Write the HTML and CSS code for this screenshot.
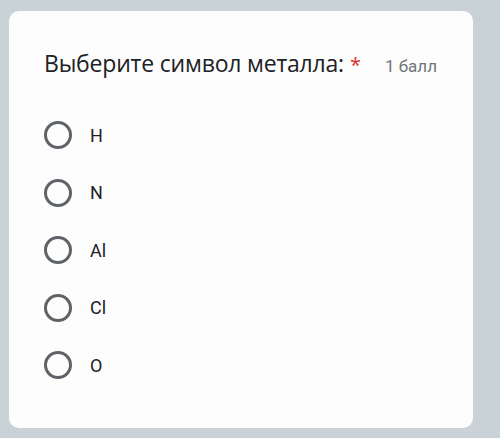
FILE: index.html
```html
<!DOCTYPE html>
<html lang="ru">
<head>
<meta charset="utf-8">
<link rel="stylesheet" href="styles.css">
</head>
<body>
<div class="card">
  <div class="head">
    <div class="title">Выберите символ металла:<span class="req">*</span></div>
    <div class="points">1 балл</div>
  </div>
  <div class="options">
    <div class="opt"><span class="radio"></span><span class="lbl">H</span></div>
    <div class="opt"><span class="radio"></span><span class="lbl">N</span></div>
    <div class="opt"><span class="radio"></span><span class="lbl">Al</span></div>
    <div class="opt"><span class="radio"></span><span class="lbl">Cl</span></div>
    <div class="opt"><span class="radio"></span><span class="lbl">O</span></div>
  </div>
</div>
</body>
</html>
```
FILE: styles.css
```css
html, body { margin: 0; padding: 0; }
body {
  background: #c9d3d7;
  width: 500px;
  height: 438px;
  overflow: hidden;
  padding-top: 11px;
  padding-left: 9px;
  box-sizing: border-box;
}
.card {
  width: 464px;
  height: 417px;
  background: #fdfdfd;
  border-radius: 10px;
  box-sizing: border-box;
  padding: 36px 0 0 35px;
}
.head {
  display: flex;
  align-items: baseline;
  height: 32px;
}
.title {
  font-family: "Open Sans", sans-serif;
  font-size: 23px;
  color: #202124;
  letter-spacing: -0.2px;
}
.req {
  color: #d93025;
  margin-left: 6px;
  font-size: 20px;
}
.points {
  margin-left: auto;
  margin-right: 36px;
  font-family: Roboto, sans-serif;
  font-size: 17px;
  color: #70757a;
}
.options {
  margin-top: 42px;
  display: flex;
  flex-direction: column;
  gap: 29.5px;
}
.opt {
  display: flex;
  align-items: center;
  height: 28px;
}
.radio {
  width: 28px;
  height: 28px;
  box-sizing: border-box;
  border: 3px solid #5f6368;
  border-radius: 50%;
}
.lbl {
  margin-left: 18px;
  font-family: Roboto, sans-serif;
  font-size: 18px;
  color: #202124;
}
```
